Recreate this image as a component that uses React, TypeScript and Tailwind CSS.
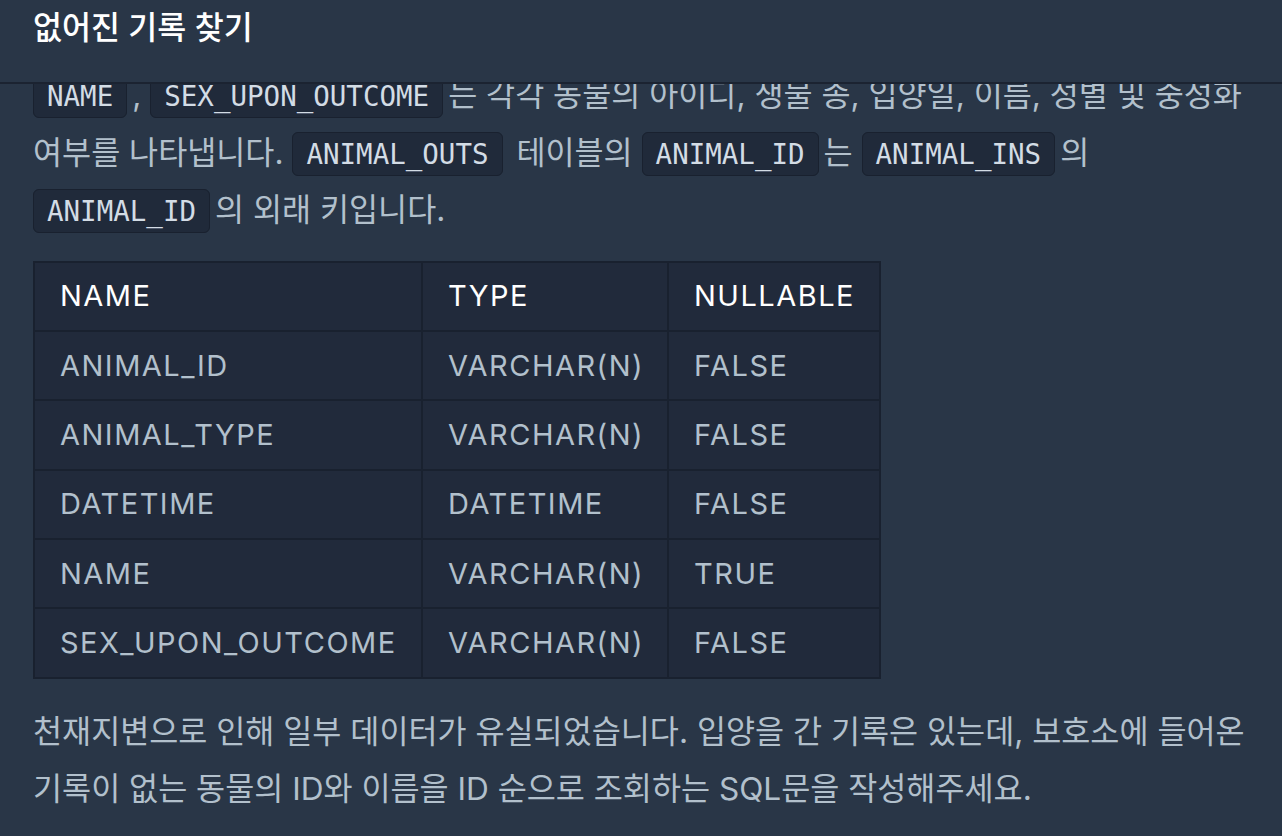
import React from 'react';

const code =
  "font-['DejaVu_Sans_Mono',monospace] text-[27.5px] leading-none text-[#d3dce5] bg-[#202a3a] border border-[#19212f] rounded-[6px] px-[13px] py-[5px] mr-[5px]";

const rows = [
  ['ANIMAL_ID', 'VARCHAR(N)', 'FALSE'],
  ['ANIMAL_TYPE', 'VARCHAR(N)', 'FALSE'],
  ['DATETIME', 'DATETIME', 'FALSE'],
  ['NAME', 'VARCHAR(N)', 'TRUE'],
  ['SEX_UPON_OUTCOME', 'VARCHAR(N)', 'FALSE'],
];

function Code({ children }: { children: React.ReactNode }) {
  return <code className={code}>{children}</code>;
}

export default function App() {
  return (
    <div className="h-[836px] w-full overflow-hidden flex flex-col bg-[#293647] font-['Inter','Noto_Sans_CJK_KR',sans-serif]">
      {/* sticky problem title */}
      <header className="h-[84px] shrink-0 border-b-2 border-[#1b2331] bg-[#293647] px-[33px] pt-[8px] relative z-10">
        <h1 className="text-[31.5px] leading-[40px] font-medium text-white">없어진 기록 찾기</h1>
      </header>

      {/* scrolled description */}
      <main className="flex-1 overflow-hidden pl-[33px] pr-[32px]">
        <div className="-mt-[18px] text-[#b2c0cc] text-[31.6px] leading-[57.5px] break-keep">
          <p>
            <Code>NAME</Code>, <Code>SEX_UPON_OUTCOME</Code>는 각각 동물의 아이디, 생물 종, 입양일, 이름, 성별 및
            중성화 여부를 나타냅니다. <Code>ANIMAL_OUTS</Code> 테이블의 <Code>ANIMAL_ID</Code>는{' '}
            <Code>ANIMAL_INS</Code>의 <Code>ANIMAL_ID</Code>의 외래 키입니다.
          </p>

          <table className="mt-[22px] w-[846px] table-fixed border-collapse bg-[#212a3b] text-[29px] leading-[40px] tracking-[1.5px]">
            <thead>
              <tr>
                <th className="w-[388px] border-2 border-[#19212f] px-[25px] py-0 h-[69.4px] text-left font-normal text-white">
                  NAME
                </th>
                <th className="w-[246px] border-2 border-[#19212f] px-[25px] py-0 h-[69.4px] text-left font-normal text-white">
                  TYPE
                </th>
                <th className="w-[212px] border-2 border-[#19212f] px-[25px] py-0 h-[69.4px] text-left font-normal text-white">
                  NULLABLE
                </th>
              </tr>
            </thead>
            <tbody>
              {rows.map((r) => (
                <tr key={r[0]}>
                  {r.map((c, i) => (
                    <td key={i} className="border-2 border-[#19212f] px-[25px] py-0 h-[69.4px] whitespace-nowrap">
                      {c}
                    </td>
                  ))}
                </tr>
              ))}
            </tbody>
          </table>

          <p className="mt-6">
            천재지변으로 인해 일부 데이터가 유실되었습니다. 입양을 간 기록은 있는데, 보호소에 들어온 기록이 없는 동물의
            ID와 이름을 ID 순으로 조회하는 SQL문을 작성해주세요.
          </p>
        </div>
      </main>
    </div>
  );
}
